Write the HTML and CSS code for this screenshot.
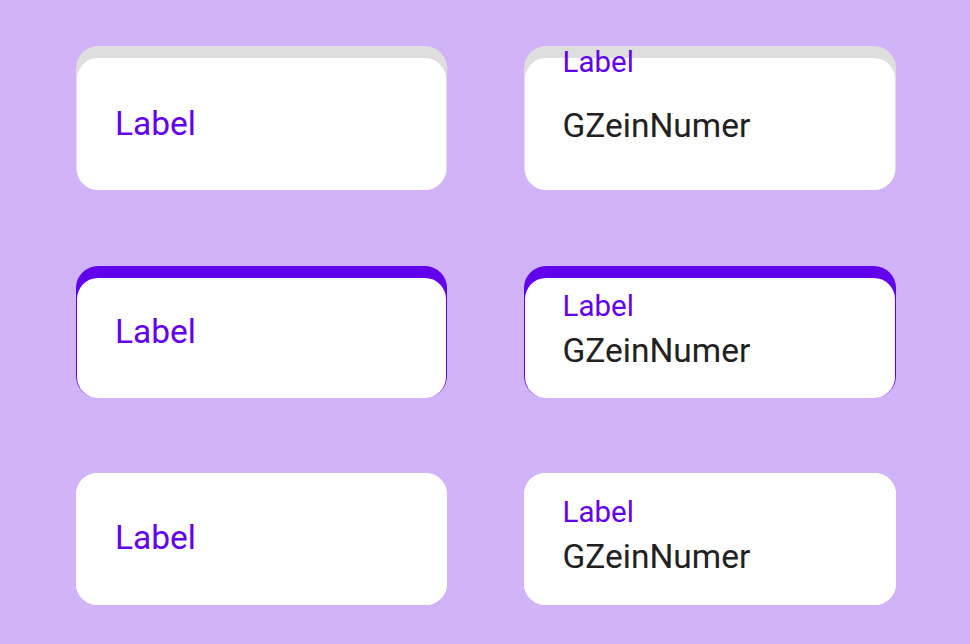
FILE: index.html
```html
<!DOCTYPE html>
<html lang="de">
<head>
<meta charset="utf-8">
<title>Text fields</title>
<link rel="stylesheet" href="styles.css">
</head>
<body>
<main class="board">
  <div class="row row-1">
    <div class="card card-filled">
      <div class="field field-empty pad-top-1">
        <span class="label label-big">Label</span>
      </div>
    </div>
    <div class="card card-filled">
      <div class="field field-value pad-top-r1">
        <span class="label label-small float-up">Label</span>
        <span class="value value-far">GZeinNumer</span>
      </div>
    </div>
  </div>
  <div class="row row-2">
    <div class="card card-focused">
      <div class="field field-empty pad-top-2">
        <span class="label label-big">Label</span>
      </div>
    </div>
    <div class="card card-focused">
      <div class="field field-value pad-top-r2">
        <span class="label label-small">Label</span>
        <span class="value">GZeinNumer</span>
      </div>
    </div>
  </div>
  <div class="row row-3">
    <div class="card card-plain">
      <div class="field field-empty pad-top-3">
        <span class="label label-big">Label</span>
      </div>
    </div>
    <div class="card card-plain">
      <div class="field field-value pad-top-r3">
        <span class="label label-small">Label</span>
        <span class="value">GZeinNumer</span>
      </div>
    </div>
  </div>
</main>
</body>
</html>
```

FILE: styles.css
```css
* { box-sizing: border-box; }

html, body {
  margin: 0;
  padding: 0;
  background: #d1b3fa;
  font-family: Roboto, "Noto Sans", "Liberation Sans", sans-serif;
  width: 970px;
  height: 644px;
  overflow: hidden;
}

.board {
  display: flex;
  flex-direction: column;
  padding: 46px 0 0 76px;
}

.row {
  display: grid;
  grid-template-columns: 371px 372px;
  column-gap: 77px;
}

.row-1 { height: 144px; }
.row-2 { height: 132px; margin-top: 76px; }
.row-3 { height: 132px; margin-top: 75px; }

.card {
  height: 100%;
  border-radius: 22px;
  display: flex;
  flex-direction: column;
}

.card-filled {
  background: #dedede;
  padding: 12px 1px 0.5px 1px;
}

.card-focused {
  background: #6200ee;
  padding: 12px 1px 0.5px 1px;
}

.card-plain {
  background: #ffffff;
  padding: 0;
}

.field {
  flex: 1;
  background: #ffffff;
  border-radius: 21px;
  padding-left: 38px;
  display: flex;
  flex-direction: column;
  align-items: flex-start;
}

.card-plain .field { padding-left: 39px; }

.field-value { padding-left: 37.5px; }
.card-plain .field-value { padding-left: 38.5px; }

.label {
  color: #6200ee;
  white-space: nowrap;
}

.label-big {
  font-size: 33.5px;
  line-height: 40px;
}

.label-small {
  font-size: 29.5px;
  line-height: 36px;
}

.value {
  color: #212121;
  font-size: 33.5px;
  line-height: 40px;
  margin-top: 7px;
  white-space: nowrap;
}

.float-up { margin-top: -14px; }
.value-far { margin-top: 26px; }

.pad-top-1 { padding-top: 46px; }
.pad-top-2 { padding-top: 34px; }
.pad-top-3 { padding-top: 45px; }
.pad-top-r1 { padding-top: 0; }
.pad-top-r2 { padding-top: 10px; }
.pad-top-r3 { padding-top: 21px; }
```
